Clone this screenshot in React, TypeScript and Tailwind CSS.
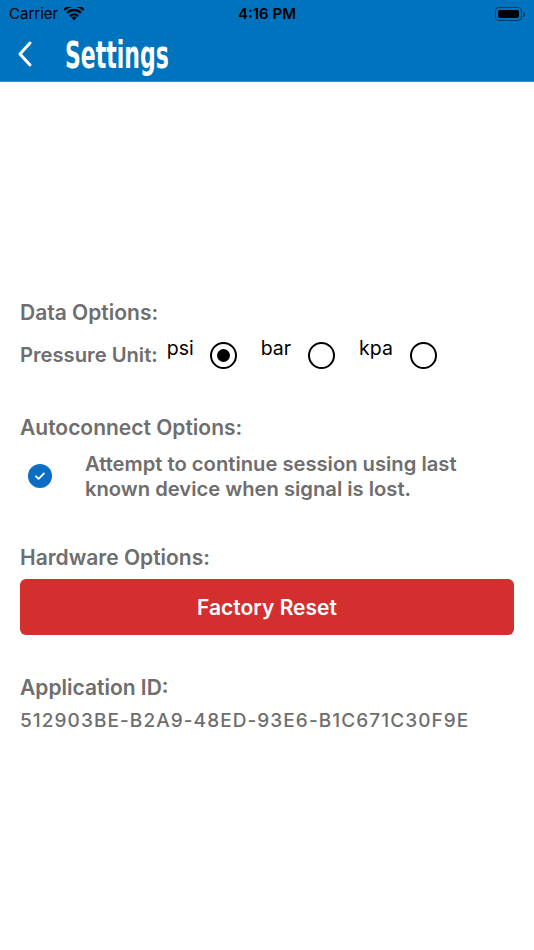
import React from 'react';

const FONT = { fontFamily: 'Inter, "Liberation Sans", sans-serif' };

const Radio = ({ checked }: { checked?: boolean }) => (
  <span className="flex h-[27px] w-[27px] items-center justify-center rounded-full border-[2.5px] border-black">
    {checked && <span className="h-[13px] w-[13px] rounded-full bg-black" />}
  </span>
);

const StatusBar = () => (
  <div className="relative flex h-[28px] items-center px-[9px] text-[15px] text-black">
    <span>Carrier</span>
    <svg width="20" height="14" viewBox="0 0 20 14" className="ml-[6px]">
      <path d="M10 13.5l-2.6-3a4 4 0 015.2 0z" fill="#000" />
      <path d="M5.2 8.2a7 7 0 019.6 0l-1.5 1.7a4.8 4.8 0 00-6.6 0z" fill="#000" />
      <path d="M2.3 5a11 11 0 0115.4 0l-1.5 1.7a8.8 8.8 0 00-12.4 0z" fill="#000" />
      <path d="M-0.4 2a14.5 14.5 0 0120.8 0l-1.5 1.7A12.3 12.3 0 001.1 3.7z" fill="#000" />
    </svg>
    <span className="absolute left-1/2 -translate-x-1/2 font-semibold">4:16 PM</span>
    <span className="ml-auto flex items-center">
      <span className="flex h-[14px] w-[27px] items-center rounded-[4px] border border-[#003a66] p-[2px]">
        <span className="h-full w-full rounded-[2px] bg-black" />
      </span>
      <span className="ml-[1px] h-[5px] w-[2px] rounded-r bg-[#003a66]" />
    </span>
  </div>
);

export default function App() {
  return (
    <div className="min-h-[950px] w-[534px] bg-white" style={FONT}>
      <div className="bg-[#0073bf]">
        <StatusBar />
        <div className="flex h-[54px] items-center border-b border-[#3d8fcc] pl-[16px]">
          <svg width="18" height="28" viewBox="0 0 18 28" className="mb-[2px]">
            <path d="M14 3L4 14l10 11" fill="none" stroke="#fff" strokeWidth="3" strokeLinecap="round" strokeLinejoin="round" />
          </svg>
          <h1
            className="ml-[31px] mt-[2px] text-[37px] font-bold leading-none text-white"
            style={{ fontFamily: '"DejaVu Sans Condensed", "Liberation Sans", sans-serif', transform: 'scaleX(0.66)', transformOrigin: 'left' }}
          >
            Settings
          </h1>
        </div>
      </div>

      <div className="px-[20px] pt-[219px] text-[#6e6e6e]">
        <p className="text-[21px] font-semibold leading-[24px]">Data Options:</p>

        <div className="mt-[9px] flex items-center">
          <span className="text-[20.2px] font-semibold">Pressure Unit:</span>
          <span className="mb-[14px] ml-[9px] text-[19.5px] text-black">psi</span>
          <span className="ml-[16px]"><Radio checked /></span>
          <span className="mb-[14px] ml-[24px] text-[19.5px] text-black">bar</span>
          <span className="ml-[17px]"><Radio /></span>
          <span className="mb-[14px] ml-[24px] text-[19.5px] text-black">kpa</span>
          <span className="ml-[17px]"><Radio /></span>
        </div>

        <p className="mt-[39px] text-[21px] font-semibold leading-[24px]">Autoconnect Options:</p>

        <div className="mt-[11px] flex items-center">
          <span className="ml-[8px] flex h-[24px] w-[24px] items-center justify-center rounded-full bg-[#0a6fc2]">
            <svg width="14" height="14" viewBox="0 0 14 14">
              <path d="M3 7.3l2.6 2.6L11 4.4" fill="none" stroke="#fff" strokeWidth="1.8" strokeLinecap="round" strokeLinejoin="round" />
            </svg>
          </span>
          <p className="ml-[33px] text-[20.2px] font-semibold leading-[25px]">
            Attempt to continue session using last
            <br />
            known device when signal is lost.
          </p>
        </div>

        <p className="mt-[45px] text-[21px] font-semibold leading-[24px]">Hardware Options:</p>

        <button className="mt-[9px] flex h-[56px] w-full items-center justify-center rounded-[6px] bg-[#d32f2f] text-[21px] font-semibold text-white">
          Factory Reset
        </button>

        <p className="mt-[41px] text-[21px] font-semibold leading-[24px]">Application ID:</p>
        <p className="mt-[9px] text-[19px] font-medium leading-[24px] tracking-[1.07px]">512903BE-B2A9-48ED-93E6-B1C671C30F9E</p>
      </div>
    </div>
  );
}
